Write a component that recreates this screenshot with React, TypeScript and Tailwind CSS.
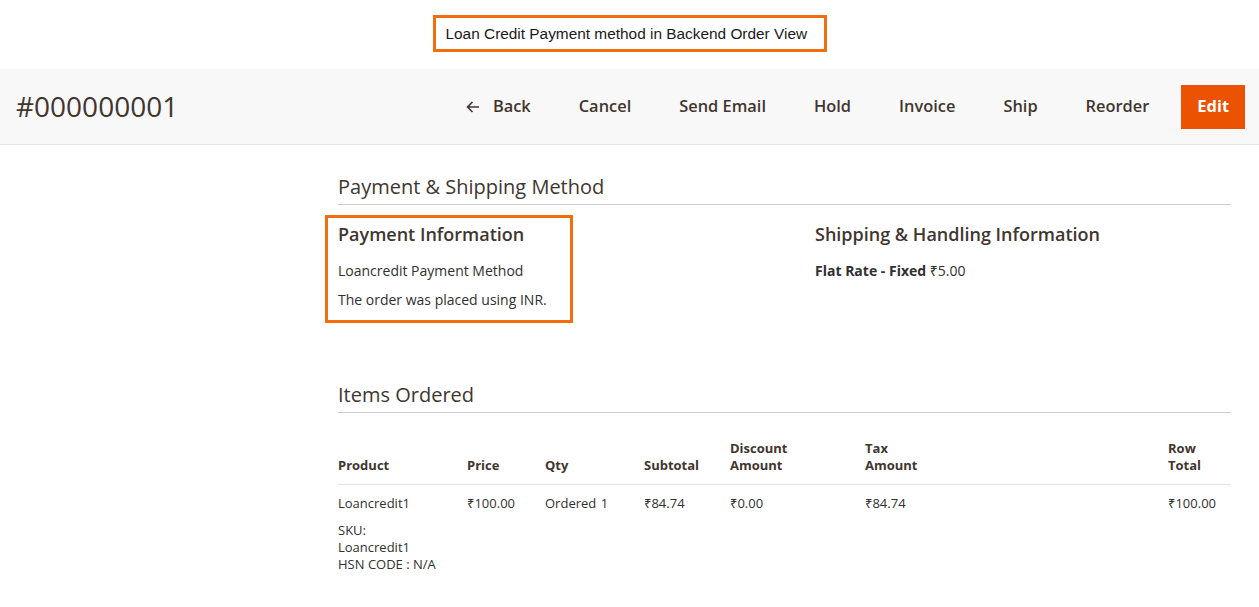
import React from "react"

const actions = ["Cancel", "Send Email", "Hold", "Invoice", "Ship", "Reorder"]

const cols = [
  { label: ["Product"], w: "w-[129px]" },
  { label: ["Price"], w: "w-[78px]" },
  { label: ["Qty"], w: "w-[99px]" },
  { label: ["Subtotal"], w: "w-[86px]" },
  { label: ["Discount", "Amount"], w: "w-[135px]" },
  { label: ["Tax", "Amount"], w: "w-[303px]" },
  { label: ["Row", "Total"], w: "w-auto" },
]

function SectionTitle({ children }: { children: React.ReactNode }) {
  return (
    <div className="border-b border-[#cccccc] pb-[3px]">
      <h2 className="text-[20px] leading-[28px] text-[#41362f]">{children}</h2>
    </div>
  )
}

export default function App() {
  return (
    <div className="bg-white min-h-[607px] text-[#303030] font-['Open_Sans','Noto_Sans',sans-serif]">
      {/* caption */}
      <div className="flex justify-center pt-[15px] pb-[17px]">
        <div className="border-[3px] border-[#f26d0c] h-[37px] w-[394px] flex items-center pl-[10px]">
          <span className="font-['Liberation_Sans','Noto_Sans',sans-serif] text-[15.4px] text-[#1a1a1a]">
            Loan Credit Payment method in Backend Order View
          </span>
        </div>
      </div>

      {/* page actions bar */}
      <div className="h-[76px] bg-[#f8f8f8] border-b border-[#e3e3e3] flex items-center justify-between pl-4 pr-[14px]">
        <h1 className="text-[28px] leading-none text-[#41362f] -mt-[2px]">#000000001</h1>
        <div className="flex items-center gap-4 text-[16.4px] font-semibold text-[#41362f]">
          <button className="flex items-center gap-[13px] px-4 h-[44px]">
            <svg width="14" height="12" viewBox="0 0 14 12" fill="none" stroke="#41362f" strokeWidth="1.6">
              <path d="M13 6H1.5M6.5 1L1.5 6l5 5" />
            </svg>
            Back
          </button>
          {actions.map((a) => (
            <button key={a} className="px-4 h-[44px]">
              {a}
            </button>
          ))}
          <button className="bg-[#eb5202] text-white font-bold px-[16px] h-[44px]">Edit</button>
        </div>
      </div>

      {/* content */}
      <div className="flex">
        <div className="w-[338px] shrink-0" />
        <div className="w-[893px]">
          <div className="pt-[28px]">
            <SectionTitle>Payment &amp; Shipping Method</SectionTitle>
            <div className="grid grid-cols-[477px_1fr] pt-[17px]">
              <div className="relative">
                <div className="absolute left-[-13px] top-[-7px] w-[248px] h-[108px] border-[3px] border-[#f26d0c]" />
                <h3 className="text-[18px] leading-[25px] font-semibold text-[#41362f]">Payment Information</h3>
                <p className="text-[14px] leading-[20px] mt-[14px]">Loancredit Payment Method</p>
                <p className="text-[14px] leading-[20px] mt-[9px]">The order was placed using INR.</p>
              </div>
              <div>
                <h3 className="text-[18px] leading-[25px] font-semibold text-[#41362f]">
                  Shipping &amp; Handling Information
                </h3>
                <p className="text-[14px] leading-[20px] mt-[14px]">
                  <span className="font-bold">Flat Rate - Fixed</span> ₹5.00
                </p>
              </div>
            </div>
          </div>

          <div className="pt-[71px]">
            <SectionTitle>Items Ordered</SectionTitle>
            <table className="w-full table-fixed mt-[27px] text-[13px] leading-[17px]">
              <thead>
                <tr className="border-b border-[#e3e3e3]">
                  {cols.map((c) => (
                    <th key={c.label.join()} className={`${c.w} text-left align-bottom font-bold text-[#41362f] pb-[10px]`}>
                      {c.label.map((l) => (
                        <div key={l}>{l}</div>
                      ))}
                    </th>
                  ))}
                </tr>
              </thead>
              <tbody>
                <tr className="align-top">
                  <td className="pt-[10px]">
                    <div>Loancredit1</div>
                    <div className="mt-[10px]">SKU:</div>
                    <div>Loancredit1</div>
                    <div>HSN CODE : N/A</div>
                  </td>
                  <td className="pt-[10px]">₹100.00</td>
                  <td className="pt-[10px]">
                    Ordered <span className="ml-[1px]">1</span>
                  </td>
                  <td className="pt-[10px]">₹84.74</td>
                  <td className="pt-[10px]">₹0.00</td>
                  <td className="pt-[10px]">₹84.74</td>
                  <td className="pt-[10px]">₹100.00</td>
                </tr>
              </tbody>
            </table>
          </div>
        </div>
      </div>
    </div>
  )
}
